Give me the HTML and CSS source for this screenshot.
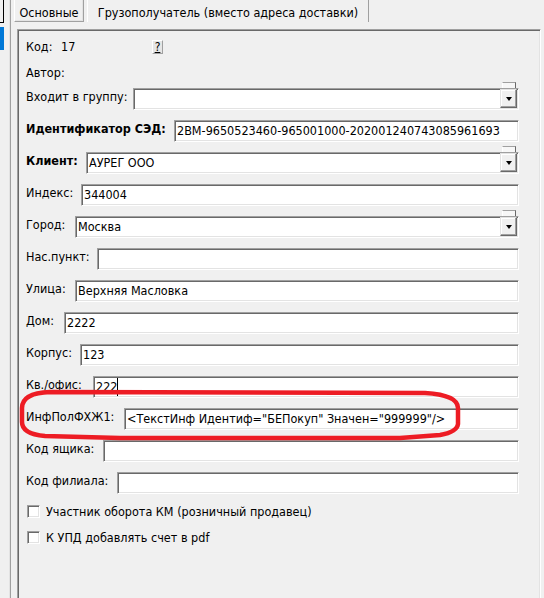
FILE: index.html
```html
<!DOCTYPE html>
<html lang="ru">
<head>
<meta charset="utf-8">
<title>Основные</title>
<link rel="stylesheet" href="styles.css">
</head>
<body>
<div class="side">
  <div class="side-box"></div>
  <div class="side-sel"></div>
</div>
<div class="split"></div>
<div class="pages">
  <div class="tabs">
    <div class="tab tab-active">Основные</div>
    <div class="tab tab-second">Грузополучатель (вместо адреса доставки)</div>
  </div>
  <div class="panel">
    <div class="row-code">
      <span class="code-lbl">Код:</span><span class="code-val">17</span><span class="help">?</span>
    </div>
    <div class="row-author">Автор:</div>
    <div class="rows">
      <div class="row w-group"><span class="lbl">Входит в группу:</span><div class="edit combo"><span class="stub"></span><span class="drop"><span class="arrow"></span></span></div></div>
      <div class="row w-sed"><span class="lbl bold">Идентификатор СЭД:</span><div class="edit">2BM-9650523460-965001000-202001240743085961693</div></div>
      <div class="row w-client"><span class="lbl bold">Клиент:</span><div class="edit combo">АУРЕГ ООО<span class="stub"></span><span class="drop"><span class="arrow"></span></span></div></div>
      <div class="row w-index"><span class="lbl">Индекс:</span><div class="edit">344004</div></div>
      <div class="row w-city"><span class="lbl">Город:</span><div class="edit combo">Москва<span class="stub"></span><span class="drop"><span class="arrow"></span></span></div></div>
      <div class="row w-np"><span class="lbl">Нас.пункт:</span><div class="edit"></div></div>
      <div class="row w-street"><span class="lbl">Улица:</span><div class="edit">Верхняя Масловка</div></div>
      <div class="row w-house"><span class="lbl">Дом:</span><div class="edit">2222</div></div>
      <div class="row w-korp"><span class="lbl">Корпус:</span><div class="edit">123</div></div>
      <div class="row w-kv"><span class="lbl">Кв./офис:</span><div class="edit">222<span class="caret"></span></div></div>
      <div class="row w-inf"><span class="lbl">ИнфПолФХЖ1:</span><div class="edit">&lt;ТекстИнф Идентиф="БЕПокуп" Значен="999999"/&gt;</div></div>
      <div class="row w-box"><span class="lbl">Код ящика:</span><div class="edit"></div></div>
      <div class="row w-fil"><span class="lbl">Код филиала:</span><div class="edit"></div></div>
    </div>
    <div class="checks">
      <div class="check"><span class="box"></span><span>Участник оборота КМ (розничный продавец)</span></div>
      <div class="check"><span class="box"></span><span>К УПД добавлять счет в pdf</span></div>
    </div>
  </div>
</div>
<svg class="mark" width="544" height="598" viewBox="0 0 544 598">
  <path d="M 50 392 L 425 393 Q 458 395 458 408 L 458 424 Q 457 432 440 435 L 400 438 L 120 438 L 45 436 Q 22 434 22 422 L 22 408 Q 22 393 50 392 Z" fill="none" stroke="#ed1c24" stroke-width="4.5" stroke-linejoin="round"/>
</svg>
</body>
</html>
```

FILE: styles.css
```css
* { box-sizing: border-box; }
html, body { margin: 0; padding: 0; }
body {
  width: 544px;
  height: 598px;
  overflow: hidden;
  background: #f0f0f0;
  font: 12.5px/15px "DejaVu Sans Condensed", "Liberation Sans", Arial, sans-serif;
  color: #000;
  display: flex;
  position: relative;
}

.side { width: 9px; display: flex; flex-direction: column; gap: 4px; flex-shrink: 0; }
.side-box { width: 4px; height: 23px; border-right: 1px solid #000; border-bottom: 1px solid #000; }
.side-sel { width: 4px; height: 23px; background: #0078d7; }

.split {
  width: 2px;
  flex-shrink: 0;
  border-left: 1px solid #e3e3e3;
  background: #a0a0a0;
}

.pages {
  margin-left: 2px;
  flex: 1;
  display: flex;
  flex-direction: column;
}

.tabs { height: 29px; display: flex; align-items: flex-start; flex-shrink: 0; }
.tab {
  height: 22px;
  padding-top: 5px;
  text-align: center;
  white-space: nowrap;
}
.tab-active {
  margin-left: 1px;
  width: 70px;
  border-left: 1px solid #fff;
  border-right: 1px solid #a0a0a0;
  border-bottom: 1px solid #a0a0a0;
  box-shadow: inset -1px -1px 0 #e3e3e3;
}
.tab-second {
  margin-left: 3px;
  width: 282px;
  border-left: 1px solid #fff;
  border-right: 1px solid #a0a0a0;
}

.panel {
  margin-left: 4px;
  width: 524px;
  flex: 1;
  border-top: 1px solid #a0a0a0;
  border-left: 1px solid #a0a0a0;
  border-right: 1px solid #fff;
  box-shadow: inset 1px 1px 0 #696969, inset -1px 0 0 #e3e3e3;
  padding: 8px 21px 0 8px;
}

.row-code { display: flex; align-items: flex-start; height: 17px; }
.code-lbl { width: 35px; padding-top: 1px; }
.code-val { width: 91px; padding-top: 1px; }
.help {
  margin-top: 2px;
  width: 11px;
  height: 14px;
  font-size: 12px;
  line-height: 12px;
  text-align: center;
  text-decoration: underline;
  background: #e6e6e6;
  border: 1px solid;
  border-color: #fff #a0a0a0 #a0a0a0 #fff;
}

.row-author { margin-top: 10px; height: 15px; }

.rows { margin-top: 8px; display: flex; flex-direction: column; gap: 10px; }
.row { display: flex; align-items: flex-start; height: 22px; }
.lbl { flex-shrink: 0; padding-top: 1px; white-space: nowrap; }
.bold { font-weight: bold; }

.edit {
  flex: 1;
  height: 22px;
  position: relative;
  background: #fff;
  border: 1px solid;
  border-color: #a0a0a0 #fff #fff #a0a0a0;
  box-shadow: inset 1px 1px 0 #696969, inset -1px -1px 0 #e3e3e3;
  padding: 2px 2px 0 2px;
  white-space: nowrap;
}

.drop {
  position: absolute;
  top: 0;
  right: 1px;
  width: 17px;
  height: 19px;
  background: #f0f0f0;
  border: 1px solid;
  border-color: #e3e3e3 #696969 #696969 #e3e3e3;
  box-shadow: inset -1px -1px 0 #a0a0a0, inset 1px 1px 0 #fff;
  display: flex;
  align-items: center;
  justify-content: center;
}
.arrow {
  width: 0;
  height: 0;
  border-left: 3.5px solid transparent;
  border-right: 3.5px solid transparent;
  border-top: 4px solid #000;
  margin-top: 1px;
}
.stub {
  position: absolute;
  top: -7px;
  right: 2px;
  width: 14px;
  height: 6px;
  background: #f7f7f7;
  border-top: 1px solid #a0a0a0;
  border-left: 1px solid #fff;
  border-right: 1px solid #696969;
}

.caret {
  display: inline-block;
  width: 1px;
  height: 18px;
  background: #000;
  vertical-align: top;
  margin-top: -1px;
}

.w-group .lbl { width: 107px; }
.w-sed .lbl { width: 148px; }
.w-client .lbl { width: 60px; }
.w-index .lbl { width: 55px; }
.w-city .lbl { width: 49px; }
.w-np .lbl { width: 71px; }
.w-street .lbl { width: 49px; }
.w-house .lbl { width: 38px; }
.w-korp .lbl { width: 54px; }
.w-kv .lbl { width: 67px; }
.w-inf .lbl { width: 98px; }
.w-box .lbl { width: 77px; }
.w-fil .lbl { width: 91px; }

.checks { margin-top: 10px; display: flex; flex-direction: column; gap: 11px; }
.check { display: flex; align-items: flex-start; height: 15px; }
.box {
  margin: 1px 6px 0 1px;
  width: 13px;
  height: 13px;
  flex-shrink: 0;
  background: #fff;
  border: 1px solid;
  border-color: #a0a0a0 #fff #fff #a0a0a0;
  box-shadow: inset 1px 1px 0 #696969, inset -1px -1px 0 #e3e3e3;
}

.mark {
  position: absolute;
  left: 0;
  top: 0;
  pointer-events: none;
}
```
